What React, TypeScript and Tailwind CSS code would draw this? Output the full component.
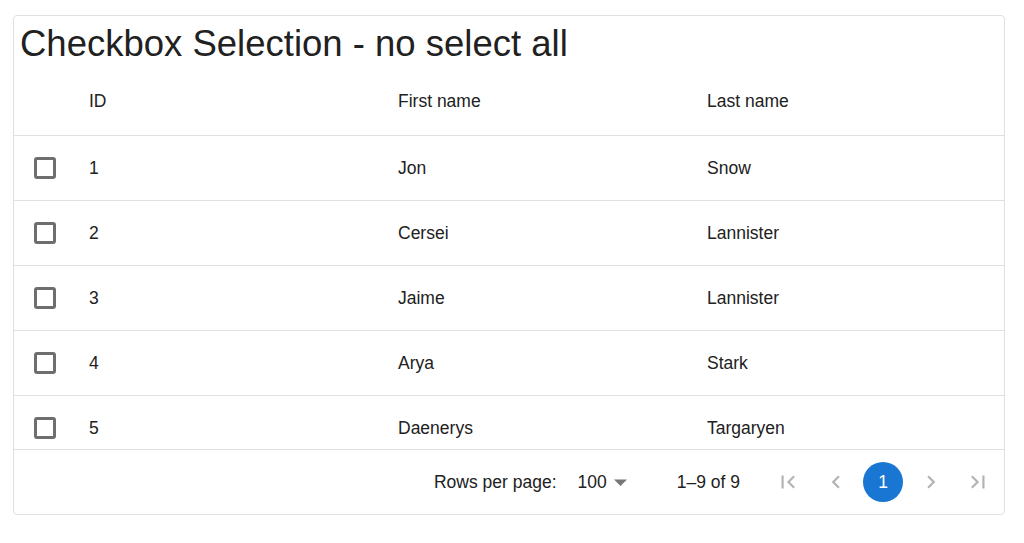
import React from "react";

const rows = [
  { id: 1, first: "Jon", last: "Snow" },
  { id: 2, first: "Cersei", last: "Lannister" },
  { id: 3, first: "Jaime", last: "Lannister" },
  { id: 4, first: "Arya", last: "Stark" },
  { id: 5, first: "Daenerys", last: "Targaryen" },
];

const Icon = ({ d }: { d: string }) => (
  <svg width="26" height="26" viewBox="0 0 24 24" fill="#b3b3b3">
    <path d={d} />
  </svg>
);

export default function App() {
  return (
    <div
      className="w-[1024px] h-[543px] bg-white pt-[15px] pl-[13px] text-[#212121]"
      style={{ fontFamily: '"Liberation Sans", Arial, sans-serif' }}
    >
      <div className="w-[992px] h-[500px] border border-[#e0e0e0] rounded-[4px] flex flex-col overflow-hidden">
        <div className="pt-[6px] pl-[6px] h-[50px] text-[36.5px] leading-[1.2] text-[#212121]">
          Checkbox Selection - no select all
        </div>
        <div className="h-[70px] shrink-0 flex items-center pt-[2px] border-b border-[#e0e0e0] text-[17.5px]">
          <div className="w-[62px]" />
          <div className="w-[309px] pl-[13px]">ID</div>
          <div className="w-[309px] pl-[13px]">First name</div>
          <div className="w-[309px] pl-[13px]">Last name</div>
        </div>
        <div className="h-[313px] shrink-0 overflow-hidden">
          {rows.map((r) => (
            <div
              key={r.id}
              className="h-[65px] flex items-center border-b border-[#e0e0e0] text-[17.5px]"
            >
              <div className="w-[62px] flex justify-center">
                <div className="w-[22px] h-[22px] border-[3px] border-[#6e6e6e] rounded-[3px]" />
              </div>
              <div className="w-[309px] pl-[13px]">{r.id}</div>
              <div className="w-[309px] pl-[13px]">{r.first}</div>
              <div className="w-[309px] pl-[13px]">{r.last}</div>
            </div>
          ))}
        </div>
        <div className="h-[65px] shrink-0 border-t border-[#e0e0e0] flex items-center justify-end pr-[6px] text-[17.5px]">
          <span>Rows per page:</span>
          <span className="ml-[21px]">100</span>
          <svg className="ml-[6px] mt-[2px]" width="15" height="8" viewBox="0 0 15 8">
            <path d="M1 0.5 L7.5 7 L14 0.5 Z" fill="#777" />
          </svg>
          <span className="ml-[49px]">1–9 of 9</span>
          <div className="ml-[28px] flex items-center gap-[7.5px]">
            <div className="w-[40px] h-[40px] flex items-center justify-center">
              <Icon d="M18.41 16.59L13.82 12l4.59-4.59L17 6l-6 6 6 6zM6 6h2v12H6z" />
            </div>
            <div className="w-[40px] h-[40px] flex items-center justify-center">
              <Icon d="M15.41 7.41L14 6l-6 6 6 6 1.41-1.41L10.83 12z" />
            </div>
            <div className="w-[40px] h-[40px] rounded-full bg-[#1976d2] text-white flex items-center justify-center">
              1
            </div>
            <div className="w-[40px] h-[40px] flex items-center justify-center">
              <Icon d="M10 6L8.59 7.41 13.17 12l-4.58 4.59L10 18l6-6z" />
            </div>
            <div className="w-[40px] h-[40px] flex items-center justify-center">
              <Icon d="M5.59 7.41L10.18 12l-4.59 4.59L7 18l6-6-6-6zM16 6h2v12h-2z" />
            </div>
          </div>
        </div>
      </div>
    </div>
  );
}
